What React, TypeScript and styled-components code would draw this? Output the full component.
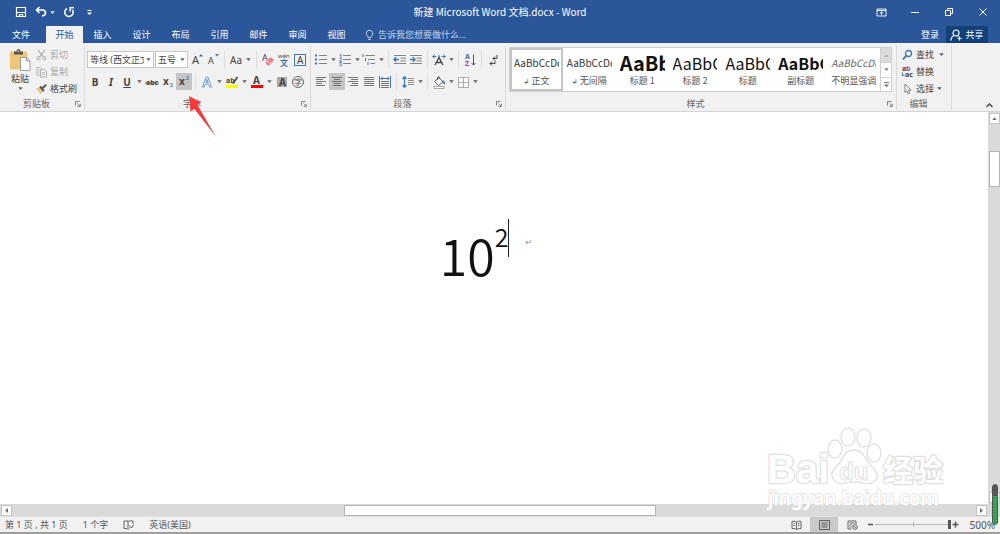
import React from "react";
import styled, { createGlobalStyle, css } from "styled-components";

const BLUE = "#2b579a";
const INK = "#444";
const ACCENT = "#3f76b0";
const UI_FONT = '"Noto Sans", "Noto Sans CJK SC", sans-serif';
const CJK_FONT = '"Noto Sans CJK SC", sans-serif';

const GlobalStyle = createGlobalStyle`
  *, *::before, *::after { box-sizing: border-box; }
  body { margin: 0; font: 9px/12px ${UI_FONT}; color: ${INK}; }
  button, select, input { font: inherit; color: inherit; margin: 0; padding: 0; border: 0; background: none; }
  svg { display: block; flex: none; }
`;

const App$ = styled.div`
  position: relative;
  display: flex;
  flex-direction: column;
  min-height: 100vh;
  background: #fff;
`;

/* ---------- title bar ---------- */
const TitleBar = styled.header`
  display: grid;
  grid-template-columns: 1fr auto 1fr;
  align-items: center;
  height: 24px;
  background: ${BLUE};
  color: #fff;
`;
const Title = styled.h1`
  margin: 0;
  font: 400 10px/14px ${CJK_FONT};
`;
const QuickAccess = styled.div`
  display: flex;
  align-items: center;
  gap: 6px;
  padding-left: 14px;
`;
const SplitButton = styled.div`
  --caret: 8px;
  display: flex;
  align-items: center;
`;
const WindowButtons = styled.div`
  display: flex;
  justify-content: flex-end;
`;
const WindowButton = styled.button`
  display: grid;
  place-items: center;
  width: 34px;
  height: 22px;
`;
const QuickButton = styled.button`
  display: grid;
  place-items: center;
  width: 14px;
  height: 16px;
`;

/* ---------- tabs ---------- */
const TabBar = styled.nav`
  display: flex;
  align-items: flex-end;
  height: 19px;
  background: ${BLUE};
  color: #fff;
`;
const Tab = styled.button<{ $kind?: "file" | "active" }>`
  width: 39px;
  height: 17px;
  line-height: 16px;
  ${(p) =>
    p.$kind === "file" &&
    css`
      width: 46px;
      padding-right: 4px;
    `}
  ${(p) =>
    p.$kind === "active" &&
    css`
      width: 37px;
      background: #f1f1f1;
      color: ${BLUE};
    `}
`;
const TellMe = styled.button`
  display: flex;
  align-items: center;
  gap: 4px;
  height: 17px;
  margin-left: 9px;
  color: #c3d1e6;
`;
const Account = styled.div`
  display: flex;
  align-items: center;
  gap: 7px;
  margin-left: auto;
  padding-right: 12px;
`;
const AccountButton = styled.button<{ $solid?: boolean }>`
  display: flex;
  align-items: center;
  justify-content: center;
  gap: 3px;
  height: 17px;
  ${(p) =>
    p.$solid &&
    css`
      width: 42px;
      background: #124078;
    `}
`;

/* ---------- ribbon ---------- */
const Ribbon = styled.section`
  display: flex;
  height: 69px;
  padding-top: 3px;
  background: #f1f1f1;
  border-bottom: 1px solid #d5d5d5;
`;
const Group = styled.div<{ $w?: number; $caret?: number }>`
  --caret: ${(p) => p.$caret ?? 9}px;
  display: flex;
  flex-direction: column;
  justify-content: space-between;
  flex: none;
  width: ${(p) => p.$w}px;
  border-right: 1px solid #dadada;
  margin-bottom: 1px;
`;
const GroupFoot = styled.div`
  display: grid;
  grid-template-columns: 1fr 10px;
  align-items: center;
  height: 12px;
  padding-right: 1px;
  text-align: center;
  color: #666;
  svg { justify-self: center; }
`;
const Rows = styled.div`
  display: flex;
  flex-direction: column;
  gap: 5px;
  padding: 5px 2px 0;
`;
const Row = styled.div`
  display: flex;
  align-items: center;
  height: 17px;
`;
const Tool = styled.button<{ $on?: boolean; $bold?: boolean; $italic?: boolean; $underline?: boolean }>`
  display: grid;
  place-items: center;
  flex: none;
  width: 16px;
  height: 17px;
  font-size: 10px;
  background: ${(p) => (p.$on ? "#c5c5c5" : "transparent")};
  font-weight: ${(p) => (p.$bold ? 700 : 400)};
  font-style: ${(p) => (p.$italic ? "italic" : "normal")};
  text-decoration: ${(p) => (p.$underline ? "underline" : "none")};
`;
const CaretButton = styled.button`
  display: grid;
  place-items: center;
  flex: none;
  width: var(--caret, 9px);
  height: 17px;
`;
const Divider = styled.span`
  flex: none;
  width: 1px;
  height: 17px;
  margin: 0 3px;
  background: #dcdcdc;
`;
const Combo = styled.label<{ $w: number }>`
  display: grid;
  grid-template-columns: minmax(0, 1fr) 9px;
  align-items: center;
  width: ${(p) => p.$w}px;
  height: 17px;
  margin-right: 1px;
  background: #fff;
  border: 1px solid #c6c6c6;
  svg { justify-self: center; }
  select {
    appearance: none;
    width: 100%;
    height: 15px;
    padding-left: 2px;
    overflow: hidden;
    white-space: nowrap;
    text-overflow: clip;
  }
`;
const ClipboardBody = styled.div`
  display: flex;
  gap: 5px;
  padding-left: 9px;
`;
const PasteButton = styled.button`
  display: flex;
  flex-direction: column;
  align-items: center;
  gap: 1px;
  width: 22px;
  padding-top: 2px;
`;
const ToolList = styled.div<{ $pad?: number }>`
  display: flex;
  flex-direction: column;
  padding-left: ${(p) => p.$pad ?? 0}px;
`;
const ListButton = styled.button<{ $muted?: boolean }>`
  display: flex;
  align-items: center;
  gap: 3px;
  height: 17px;
  color: ${(p) => (p.$muted ? "#a6a6a6" : INK)};
`;

/* ---------- style gallery ---------- */
const Gallery = styled.div`
  display: flex;
  height: 45px;
  margin: 1px 4px 0 3px;
  background: #fff;
  border: 1px solid #d0d0d0;
`;
const StyleCell = styled.button<{ $on?: boolean }>`
  display: grid;
  grid-template-rows: 1fr 14px;
  flex: 1;
  min-width: 0;
  padding: 1px 2px 0;
  border: 2px solid ${(p) => (p.$on ? "#c4c4c4" : "transparent")};
  font-family: ${CJK_FONT};
`;
const Sample = styled.span<{ $size: number; $bold?: boolean; $italic?: boolean }>`
  overflow: hidden;
  white-space: nowrap;
  text-align: left;
  align-self: center;
  font-size: ${(p) => p.$size}px;
  line-height: 22px;
  font-weight: ${(p) => (p.$bold ? 700 : 400)};
  font-style: ${(p) => (p.$italic ? "italic" : "normal")};
  color: ${(p) => (p.$italic ? "#666" : p.$size > 10 ? "#111" : "#333")};
`;
const StyleName = styled.span`
  white-space: nowrap;
  color: #555;
  small { font: 7px/8px "DejaVu Sans", sans-serif; }
`;
const GalleryScroll = styled.div`
  display: grid;
  grid-template-rows: repeat(3, 1fr);
  width: 11px;
  border-left: 1px solid #d0d0d0;
`;
const GalleryArrow = styled.button<{ $off?: boolean }>`
  display: grid;
  place-items: center;
  background: ${(p) => (p.$off ? "#dcdcdc" : "#fff")};
  color: ${(p) => (p.$off ? "#aaa" : "#666")};
  & + & { border-top: 1px solid #d0d0d0; }
`;
const Collapse = styled.button`
  align-self: flex-end;
  margin: 0 7px 3px auto;
`;

/* ---------- document ---------- */
const Workspace = styled.main`
  display: grid;
  grid-template-columns: 1fr 12px;
  flex: 1;
`;
const Page = styled.article`
  display: flex;
  justify-content: center;
  padding-top: 107px;
  color: #111;
  font-family: ${CJK_FONT};
`;
const Formula = styled.p`
  display: flex;
  align-items: flex-start;
  margin: 0;
  font-size: 50px;
  line-height: 70px;
  font-weight: 350;
  sup {
    font-size: 25px;
    line-height: 34px;
  }
`;
const TextCursor = styled.span`
  width: 1px;
  height: 38px;
  background: #222;
`;
const ReturnMark = styled.span`
  padding: 0 16px;
  font: 8px/48px "DejaVu Sans", sans-serif;
  color: #888;
`;
const VScroll = styled.div`
  display: flex;
  flex-direction: column;
  align-items: center;
  padding: 1px 0;
  background: #dadada;
`;
const HScroll = styled.div`
  display: flex;
  align-items: center;
  height: 12px;
  padding: 0 13px 0 1px;
  background: #dadada;
`;
const ScrollButton = styled.button`
  display: grid;
  place-items: center;
  flex: none;
  width: 11px;
  height: 11px;
  background: #fff;
  border: 1px solid #c3c3c3;
  color: #555;
`;
const Space = styled.span<{ $grow: number }>`
  flex: ${(p) => p.$grow} 0 0;
`;
const Thumb = styled.span<{ $grow: number; $vertical?: boolean }>`
  flex: ${(p) => p.$grow} 0 0;
  align-self: center;
  background: #fff;
  border: 1px solid #b5b5b5;
  ${(p) => (p.$vertical ? "width: 11px;" : "height: 11px;")}
`;

/* ---------- status bar ---------- */
const StatusBar = styled.footer`
  display: flex;
  align-items: center;
  height: 18px;
  padding: 0 5px;
  background: #f1f1f1;
  border-top: 1px solid #e0e0e0;
  border-bottom: 2px solid #a09e9b;
  color: #555;
`;
const StatusItem = styled.button`
  margin-right: 15px;
  white-space: nowrap;
`;
const StatusText = styled(StatusItem)`
  word-break: keep-all;
`;
const ViewButton = styled.button<{ $on?: boolean }>`
  display: grid;
  place-items: center;
  width: 28px;
  height: 15px;
  background: ${(p) => (p.$on ? "#c9c9c9" : "transparent")};
`;
const ZoomStep = styled.button`
  display: grid;
  place-items: center;
  width: 9px;
  height: 15px;
`;
const ZoomRange = styled.input`
  appearance: none;
  width: 76px;
  height: 11px;
  background: linear-gradient(#b8b8b8, #b8b8b8) center / 100% 1px no-repeat,
    linear-gradient(#b8b8b8, #b8b8b8) center / 1px 5px no-repeat;
  &::-webkit-slider-thumb {
    appearance: none;
    width: 3px;
    height: 9px;
    background: #555;
  }
`;
const ZoomValue = styled.button`
  width: 35px;
  text-align: right;
  font-size: 10px;
`;

/* ---------- overlays ---------- */
const Pointer = styled.svg`
  position: absolute;
  left: 186px;
  top: 94px;
  pointer-events: none;
`;
const Watermark = styled.div`
  position: absolute;
  right: 52px;
  bottom: 22px;
  width: 182px;
  pointer-events: none;
`;
const Meter = styled.div`
  position: absolute;
  right: 2px;
  bottom: 9px;
  width: 6px;
  height: 41px;
  border-radius: 3px;
  border: 1px solid #555;
  background: linear-gradient(#555 0 11px, transparent 11px),
    repeating-linear-gradient(#2f9e50 0 2px, #45ad62 2px 3px);
`;

/* ---------- icons ---------- */
type IconProps = { w?: number; h?: number; vb?: string; children: React.ReactNode };
const Icon = ({ w = 14, h = 14, vb, children }: IconProps) => (
  <svg width={w} height={h} viewBox={vb ?? `0 0 ${w} ${h}`} fill="none" stroke="currentColor" aria-hidden="true">
    {children}
  </svg>
);
const Tri = ({ up, left, right }: { up?: boolean; left?: boolean; right?: boolean }) => (
  <Icon w={5} h={5}>
    <path
      stroke="none"
      fill="currentColor"
      opacity=".85"
      d={up ? "M.3 3.900h4.400L2.500 1.300z" : left ? "M4 0v5L1 2.500z" : right ? "M1 0v5l3-2.500z" : "M.3 1.300h4.400L2.500 3.900z"}
    />
  </Icon>
);
const Caret = ({ label }: { label: string }) => (
  <CaretButton aria-label={label}>
    <Tri />
  </CaretButton>
);
type GlyphProps = { x: number; y: number; size: number; fill?: string; bold?: boolean; children: string };
const Glyph = ({ x, y, size, fill = INK, bold, children }: GlyphProps) => (
  <text x={x} y={y} fontSize={size} fill={fill} stroke="none" fontWeight={bold ? 700 : 400} fontFamily={UI_FONT}>
    {children}
  </text>
);
const Launcher = () => (
  <Icon w={6} h={6}>
    <path d="M.5 4.500v-4h4M2.300 2.300l2.500 2.500M5.300 2.800v2.700H2.600" stroke="#777" strokeWidth=".9" />
  </Icon>
);
const Lines = ({ rows }: { rows: [number, number][] }) => (
  <Icon>
    {rows.map(([a, b], i) => (
      <path key={i} d={`M${a} ${2.5 + i * 2}H${b}`} stroke="#666" strokeWidth=".9" />
    ))}
  </Icon>
);
const ListIcon = ({ kind }: { kind: "dot" | "num" | "multi" }) => (
  <Icon>
    {[0, 1, 2].map((i) => {
      const y = 2.5 + i * 4;
      const dx = kind === "multi" ? i * 2.5 : 0;
      return (
        <g key={i}>
          {kind === "dot" ? (
            <rect x="1" y={y - 1} width="2" height="2" fill={ACCENT} stroke="none" />
          ) : kind === "num" ? (
            <Glyph x={1} y={y + 2} size={5} fill={ACCENT} bold>{`${i + 1}`}</Glyph>
          ) : (
            <path d={`M${1 + dx} ${y - 1.500}v3`} stroke={ACCENT} />
          )}
          <path d={`M${kind === "multi" ? 3.5 + dx : 5} ${y}H13`} stroke="#777" strokeWidth=".9" />
        </g>
      );
    })}
  </Icon>
);
const IndentIcon = ({ out }: { out?: boolean }) => (
  <Icon>
    <path d="M1 2.500h12M7.500 5.200H13M7.500 7.900H13M1 10.500h12" stroke="#777" strokeWidth=".9" />
    <path
      d={out ? "M6 6.500H1M3.200 4.300L1 6.500l2.200 2.200" : "M1 6.500h5M3.800 4.300L6 6.500 3.800 8.700"}
      stroke={ACCENT}
      strokeWidth="1.400"
    />
  </Icon>
);

/* ---------- data ---------- */
const tabs = ["插入", "设计", "布局", "引用", "邮件", "审阅", "视图"];
const styles = [
  { sample: "AaBbCcDd", name: "正文", size: 10, mark: true, on: true },
  { sample: "AaBbCcDd", name: "无间隔", size: 10, mark: true },
  { sample: "AaBb", name: "标题 1", size: 20, bold: true },
  { sample: "AaBbC", name: "标题 2", size: 16 },
  { sample: "AaBbC", name: "标题", size: 16 },
  { sample: "AaBbC", name: "副标题", size: 16, bold: true },
  { sample: "AaBbCcDd", name: "不明显强调", size: 10, italic: true },
];

const ClipboardGroup = () => (
  <Group $w={85}>
    <ClipboardBody>
      <PasteButton>
        <Icon w={22} h={24}>
          <path d="M1 3.500h17v18H1z" fill="#edc777" stroke="none" />
          <path d="M5 6.500V3.500h2.500q0-2.500 2-2.500t2 2.500H14v3z" fill="#555" stroke="none" />
          <circle cx="9.500" cy="3.300" r=".9" fill="#edc777" stroke="none" />
          <path d="M11.500 9.500h6l3.500 3.500v9.500h-9.500z" fill="#fff" stroke="#888" strokeWidth=".8" />
          <path d="M17.500 9.500V13H21" stroke="#888" strokeWidth=".8" />
        </Icon>
        <span>粘贴</span>
        <Tri />
      </PasteButton>
      <ToolList>
        <ListButton $muted>
          <Icon w={11} h={12}>
            <path d="M2 1l5.500 7M9 1L3.500 8" strokeWidth="1.100" />
            <circle cx="2.500" cy="9.300" r="1.600" />
            <circle cx="8.500" cy="9.300" r="1.600" />
          </Icon>
          剪切
        </ListButton>
        <ListButton $muted>
          <Icon w={11} h={12}>
            <path
              d="M4.500 9H.8V1.500h3.700L6 3M4.500 3.500h3.800l2.200 2v5.500h-6zM6 6.500h3M6 8.500h3M2 4h1.500M2 6h1.500"
              strokeWidth=".8"
            />
          </Icon>
          复制
        </ListButton>
        <ListButton>
          <Icon w={11} h={12}>
            <path d="M.3 5.500L4.500 4l3 3.500-3 3.700z" fill="#edc082" stroke="none" />
            <path d="M4 3.500l4 4.500M6.500 5l3.800-3.200" stroke="#555" strokeWidth="2" />
          </Icon>
          格式刷
        </ListButton>
      </ToolList>
    </ClipboardBody>
    <GroupFoot>
      剪贴板
      <Launcher />
    </GroupFoot>
  </Group>
);

const FontGroup = () => (
  <Group $w={226}>
    <Rows>
      <Row>
        <Combo $w={67}>
          <select aria-label="字体">
            <option>等线 (西文正文)</option>
          </select>
          <Tri />
        </Combo>
        <Combo $w={33}>
          <select aria-label="字号">
            <option>五号</option>
          </select>
          <Tri />
        </Combo>
        <Tool aria-label="增大字号">
          <Icon>
            <Glyph x={2} y={11} size={11}>A</Glyph>
            <path d="M9 3.500h4L11 1z" fill={ACCENT} stroke="none" />
          </Icon>
        </Tool>
        <Tool aria-label="减小字号">
          <Icon>
            <Glyph x={2} y={11} size={9}>A</Glyph>
            <path d="M9 1h4l-2 2.500z" fill={ACCENT} stroke="none" />
          </Icon>
        </Tool>
        <Divider />
        <Tool aria-label="更改大小写">Aa</Tool>
        <Caret label="大小写选项" />
        <Divider />
        <Tool aria-label="清除格式">
          <Icon>
            <Glyph x={1} y={8} size={9}>A</Glyph>
            <path d="M4.500 9.500L9.500 4 13 7l-5 5.500H6.500z" fill="#e8808c" stroke="none" />
            <path d="M6 7.800l3.800 3" stroke="#fff" strokeWidth=".7" />
          </Icon>
        </Tool>
        <Tool aria-label="拼音指南">
          <Icon>
            <Glyph x={1} y={5} size={6}>wén</Glyph>
            <Glyph x={3} y={13} size={8} fill={ACCENT} bold>文</Glyph>
          </Icon>
        </Tool>
        <Tool aria-label="字符边框">
          <Icon>
            <rect x="1.500" y="1.500" width="11" height="11" stroke={ACCENT} />
            <Glyph x={4} y={11} size={10}>A</Glyph>
          </Icon>
        </Tool>
      </Row>
      <Row>
        <Tool $bold>B</Tool>
        <Tool $italic $bold>I</Tool>
        <Tool $underline $bold>U</Tool>
        <Caret label="下划线选项" />
        <Tool aria-label="删除线">
          <Icon>
            <Glyph x={1} y={10} size={7} bold>abc</Glyph>
            <path d="M0 8h14" strokeWidth=".8" />
          </Icon>
        </Tool>
        <Tool aria-label="下标">
          <Icon>
            <Glyph x={2} y={10} size={10} bold>x</Glyph>
            <Glyph x={9} y={12} size={5} fill={ACCENT} bold>2</Glyph>
          </Icon>
        </Tool>
        <Tool $on aria-label="上标" aria-pressed="true">
          <Icon>
            <Glyph x={2} y={10} size={10} bold>x</Glyph>
            <Glyph x={9} y={5} size={5} fill={ACCENT} bold>2</Glyph>
          </Icon>
        </Tool>
        <Divider />
        <Tool aria-label="文本效果">
          <Icon>
            <path
              d="M2.500 12L6.200 2h1.600l3.700 10H9.700l-1-2.800H5.300l-1 2.800zM5.900 7.500h2.200L7 4.300z"
              fill="#fff"
              stroke="#5b91cc"
              strokeWidth=".9"
            />
          </Icon>
        </Tool>
        <Caret label="文本效果选项" />
        <Tool aria-label="突出显示">
          <Icon>
            <Glyph x={1} y={8} size={7} bold>ab</Glyph>
            <path d="M12.500 2L8 8.500" strokeWidth="1.600" />
            <path d="M1 11.500h12" stroke="#ff0" strokeWidth="3" />
          </Icon>
        </Tool>
        <Caret label="突出显示颜色" />
        <Tool aria-label="字体颜色">
          <Icon>
            <Glyph x={3} y={9} size={10} bold>A</Glyph>
            <path d="M1 11.500h12" stroke="#f00" strokeWidth="3" />
          </Icon>
        </Tool>
        <Caret label="字体颜色选项" />
        <Tool aria-label="字符底纹">
          <Icon>
            <rect x="2" y="2" width="10" height="10" fill="#aaa" stroke="none" />
            <Glyph x={4} y={11} size={10} bold>A</Glyph>
          </Icon>
        </Tool>
        <Tool aria-label="带圈字符">
          <Icon>
            <circle cx="7" cy="7" r="5.500" strokeWidth=".8" />
            <Glyph x={3} y={10} size={8}>字</Glyph>
          </Icon>
        </Tool>
      </Row>
    </Rows>
    <GroupFoot>
      字体
      <Launcher />
    </GroupFoot>
  </Group>
);

const ParagraphGroup = () => (
  <Group $w={195} $caret={8}>
    <Rows>
      <Row>
        <Tool aria-label="项目符号"><ListIcon kind="dot" /></Tool>
        <Caret label="项目符号选项" />
        <Tool aria-label="编号"><ListIcon kind="num" /></Tool>
        <Caret label="编号选项" />
        <Tool aria-label="多级列表"><ListIcon kind="multi" /></Tool>
        <Caret label="多级列表选项" />
        <Divider />
        <Tool aria-label="减少缩进"><IndentIcon out /></Tool>
        <Tool aria-label="增加缩进"><IndentIcon /></Tool>
        <Divider />
        <Tool aria-label="中文版式">
          <Icon>
            <path d="M3 12l4-7.500L11 12M4.500 9.500h5" strokeWidth="1.300" />
            <path d="M.5 3.500h4M2.500 1.500L.8 3.500l1.700 2M13.500 3.500h-4M11.500 1.500l1.700 2-1.700 2M7 2v3" stroke={ACCENT} />
          </Icon>
        </Tool>
        <Caret label="中文版式选项" />
        <Divider />
        <Tool aria-label="排序">
          <Icon>
            <Glyph x={2} y={6} size={7} fill={ACCENT} bold>A</Glyph>
            <Glyph x={2} y={13} size={7} fill="#8452a8" bold>Z</Glyph>
            <path d="M10.500 1.500v10.500M8.500 10l2 2 2-2" strokeWidth=".9" />
          </Icon>
        </Tool>
        <Divider />
        <Tool aria-label="显示编辑标记">
          <Icon>
            <path d="M11 2v3.500H7M9 3.500l-2 2 2 2M9 8v2.500H4M6 8.500l-2 2 2 2" />
          </Icon>
        </Tool>
      </Row>
      <Row>
        <Tool aria-label="左对齐"><Lines rows={[[2, 12], [2, 9], [2, 12], [2, 8], [2, 11]]} /></Tool>
        <Tool $on aria-label="居中"><Lines rows={[[2, 12], [4, 10], [2, 12], [4, 10], [3, 11]]} /></Tool>
        <Tool aria-label="右对齐"><Lines rows={[[2, 12], [5, 12], [2, 12], [6, 12], [4, 12]]} /></Tool>
        <Tool aria-label="两端对齐"><Lines rows={[[2, 12], [2, 12], [2, 12], [2, 12], [2, 12]]} /></Tool>
        <Tool aria-label="分散对齐">
          <Icon>
            <path
              d="M1.500 1v12M12.500 1v12M3 3.500h8M4.500 2L3 3.500 4.500 5M9.500 2L11 3.500 9.500 5"
              stroke={ACCENT}
            />
            <path d="M3 6.500h8M3 8.500h8M3 10.500h8M3 12.500h8" stroke="#666" strokeWidth=".9" />
          </Icon>
        </Tool>
        <Divider />
        <Tool aria-label="行距">
          <Icon>
            <path d="M3.500 2v10M1.500 4l2-2.300 2 2.300M1.500 10l2 2.300 2-2.300" stroke={ACCENT} strokeWidth="1.200" />
            <path d="M7 3.500h6M7 5.500h6M7 7.500h6M7 9.500h6" stroke="#777" strokeWidth=".8" />
          </Icon>
        </Tool>
        <Caret label="行距选项" />
        <Divider />
        <Tool aria-label="底纹">
          <Icon>
            <path d="M2.500 6.500L7 2.500l4 4.500-4.500 3.500zM5.500 5V2.500q1-2 2 0V4" fill="#fff" strokeWidth=".9" />
            <path d="M10.500 5q3 1 2.500 5-1.500-.5-2-3z" fill={ACCENT} stroke="none" />
            <path d="M2 11.500h10v2H2z" stroke="#888" strokeWidth=".7" fill="#fff" />
          </Icon>
        </Tool>
        <Caret label="底纹选项" />
        <Tool aria-label="边框">
          <Icon>
            <path d="M2.500 2.500h10v10h-10zM7.500 2.500v10M2.500 7.500h10" stroke="#999" fill="#fff" strokeWidth=".8" />
          </Icon>
        </Tool>
        <Caret label="边框选项" />
      </Row>
    </Rows>
    <GroupFoot>
      段落
      <Launcher />
    </GroupFoot>
  </Group>
);

const StylesGroup = () => (
  <Group $w={391}>
    <Gallery>
      {styles.map((s) => (
        <StyleCell key={s.name} $on={s.on}>
          <Sample $size={s.size} $bold={s.bold} $italic={s.italic}>{s.sample}</Sample>
          <StyleName>
            {s.mark && <small>↲ </small>}
            {s.name}
          </StyleName>
        </StyleCell>
      ))}
      <GalleryScroll>
        <GalleryArrow $off aria-label="上一行"><Tri up /></GalleryArrow>
        <GalleryArrow aria-label="下一行"><Tri /></GalleryArrow>
        <GalleryArrow aria-label="其他样式">
          <Icon w={7} h={7}>
            <path d="M1 1.500h5" strokeWidth=".9" />
            <path d="M1 3.500h5L3.500 6z" fill="currentColor" stroke="none" />
          </Icon>
        </GalleryArrow>
      </GalleryScroll>
    </Gallery>
    <GroupFoot>
      样式
      <Launcher />
    </GroupFoot>
  </Group>
);

const EditGroup = () => (
  <Group $w={55}>
    <ToolList $pad={5}>
      <ListButton>
        <Icon w={11} h={12}>
          <circle cx="6.500" cy="4.500" r="3" stroke={ACCENT} strokeWidth="1.300" />
          <path d="M4.300 6.700L1 10.300" stroke={ACCENT} strokeWidth="1.800" />
        </Icon>
        查找
        <Caret label="查找选项" />
      </ListButton>
      <ListButton>
        <Icon w={11} h={12}>
          <Glyph x={0} y={5} size={7} bold>a</Glyph>
          <Glyph x={4} y={5} size={7} fill="#8452a8" bold>b</Glyph>
          <Glyph x={3} y={11} size={7} bold>ac</Glyph>
          <path d="M.5 6.500v3h2" stroke={ACCENT} />
        </Icon>
        替换
      </ListButton>
      <ListButton>
        <Icon w={11} h={12}>
          <path d="M3 1v8.500l2-1.800 1.300 3.300 1.400-.6L6.500 7.200H9z" fill="#fff" stroke="#666" strokeWidth=".8" />
        </Icon>
        选择
        <Tri />
      </ListButton>
    </ToolList>
    <GroupFoot as="div">
      编辑
      <span />
    </GroupFoot>
  </Group>
);

export default function App() {
  return (
    <App$>
      <GlobalStyle />
      <TitleBar>
        <QuickAccess>
          <QuickButton aria-label="保存">
            <Icon w={12} h={12}>
              <path d="M1.500 1.500h9v9h-9zM1.500 6.500h9M4.500 10.500v-2h3v2" strokeWidth="1.200" />
            </Icon>
          </QuickButton>
          <SplitButton>
            <QuickButton aria-label="撤消">
              <Icon w={12} h={12}>
                <path d="M1.500 4h6q3 0 3 2.800T7 10M4.500 1l-3 3 3 3" strokeWidth="1.600" />
              </Icon>
            </QuickButton>
            <Caret label="撤消选项" />
          </SplitButton>
          <QuickButton aria-label="恢复">
            <Icon w={12} h={12}>
              <path d="M4 2.500A4.200 4.200 0 1 0 9.500 4M11 1.700H7.200V5.500" strokeWidth="1.500" />
            </Icon>
          </QuickButton>
          <QuickButton aria-label="自定义快速访问工具栏">
            <Icon w={7} h={7}>
              <path d="M1.500 1.500h4" />
              <path d="M1 3.500h5L3.500 6z" fill="currentColor" stroke="none" />
            </Icon>
          </QuickButton>
        </QuickAccess>
        <Title>新建 Microsoft Word 文档.docx - Word</Title>
        <WindowButtons>
          <WindowButton aria-label="功能区显示选项">
            <Icon w={11} h={9}>
              <path d="M1 1h9v7H1zM1 2.500h9M5.500 7V4M4 5.200L5.500 3.800 7 5.200" strokeWidth=".9" />
            </Icon>
          </WindowButton>
          <WindowButton aria-label="最小化">
            <Icon w={8} h={9}><path d="M0 4.500h8" /></Icon>
          </WindowButton>
          <WindowButton aria-label="还原">
            <Icon w={8} h={8}><path d="M.5 2.500h5v5h-5zM2.500 2.500v-2h5v5h-2" /></Icon>
          </WindowButton>
          <WindowButton aria-label="关闭">
            <Icon w={8} h={8}><path d="M.5.5l7 7M7.500.5l-7 7" /></Icon>
          </WindowButton>
        </WindowButtons>
      </TitleBar>

      <TabBar>
        <Tab $kind="file">文件</Tab>
        <Tab $kind="active">开始</Tab>
        {tabs.map((t) => <Tab key={t}>{t}</Tab>)}
        <TellMe>
          <Icon w={9} h={12}>
            <path d="M3 8.500Q3 7.300 2 6.300 1 5 1.300 3.800 2 1.200 4.500 1.200T7.700 3.800Q8 5 7 6.300 6 7.300 6 8.500zM3.200 10.500h2.600" />
          </Icon>
          告诉我您想要做什么...
        </TellMe>
        <Account>
          <AccountButton>登录</AccountButton>
          <AccountButton $solid>
            <Icon w={12} h={12}>
              <circle cx="6" cy="4" r="3" strokeWidth="1.200" />
              <path d="M1 11.500q0-4 3.500-5M7.500 6.700l1 .8M9.500 7.500v4M7.500 9.500h4" strokeWidth="1.200" />
            </Icon>
            共享
          </AccountButton>
        </Account>
      </TabBar>

      <Ribbon>
        <ClipboardGroup />
        <FontGroup />
        <ParagraphGroup />
        <StylesGroup />
        <EditGroup />
        <Collapse aria-label="折叠功能区">
          <Icon w={7} h={5}><path d="M.5 4L3.500 1l3 3" strokeWidth="1.300" /></Icon>
        </Collapse>
      </Ribbon>

      <Workspace>
        <Page>
          <Formula>
            10<sup>2</sup>
            <TextCursor />
            <ReturnMark>↵</ReturnMark>
          </Formula>
        </Page>
        <VScroll>
          <ScrollButton aria-label="向上滚动"><Tri up /></ScrollButton>
          <Space $grow={27} />
          <Thumb $vertical $grow={34} />
          <Space $grow={307} />
          <ScrollButton aria-label="向下滚动"><Tri /></ScrollButton>
        </VScroll>
      </Workspace>
      <HScroll>
        <ScrollButton aria-label="向左滚动"><Tri left /></ScrollButton>
        <Space $grow={332} />
        <Thumb $grow={311} />
        <Space $grow={320} />
        <ScrollButton aria-label="向右滚动"><Tri right /></ScrollButton>
      </HScroll>

      <StatusBar>
        <StatusText>第 1 页 , 共 1 页</StatusText>
        <StatusText>1 个字</StatusText>
        <StatusItem aria-label="校对">
          <Icon w={11} h={11}>
            <path
              d="M5 9.500V2H1v7.500h3L5.500 11M5 2.500Q6 1.500 10 2v3M6 9.500l1-1M6.500 6.500l2 2.500L11 5.500"
              strokeWidth=".9"
            />
          </Icon>
        </StatusItem>
        <StatusText>英语(美国)</StatusText>
        <Space $grow={1} />
        <ViewButton aria-label="阅读视图">
          <Icon w={11} h={10}>
            <path
              d="M5.500 2v7.500M5.500 2Q3 .5 1 1.500v7q2-.5 4.500 1Q8 8 10 8.500v-7Q8 .5 5.500 2M2.500 3.500H4M2.500 5.500H4M7 3.500h1.500M7 5.500h1.500"
              strokeWidth=".9"
            />
          </Icon>
        </ViewButton>
        <ViewButton $on aria-label="页面视图">
          <Icon w={11} h={10}>
            <path d="M.5.500h10v9H.500zM2.500 3h6M2.500 5h6M2.500 7h6" strokeWidth=".9" />
          </Icon>
        </ViewButton>
        <ViewButton aria-label="Web 版式视图">
          <Icon w={11} h={10}>
            <path d="M4.500 9H1V1h8v3M2.500 3h5M2.500 5H5M2.500 7h2" strokeWidth=".9" />
            <circle cx="8" cy="7" r="2.300" strokeWidth=".9" />
            <path d="M6.300 5.500l3.400 3" strokeWidth=".9" />
          </Icon>
        </ViewButton>
        <ZoomStep aria-label="缩小">
          <Icon w={5} h={7}><path d="M0 3.500h5" strokeWidth="1.500" /></Icon>
        </ZoomStep>
        <ZoomRange type="range" min={10} max={500} defaultValue={500} aria-label="显示比例" />
        <ZoomStep aria-label="放大">
          <Icon w={7} h={7}><path d="M.5 3.500h6M3.500.5v6" strokeWidth="1.400" /></Icon>
        </ZoomStep>
        <ZoomValue>500%</ZoomValue>
      </StatusBar>

      <Pointer width="32" height="44" viewBox="0 0 32 44" aria-hidden="true">
        <path d="M3 2l12 6.500-3.500 2.500L30 43 8.500 15 4.500 17.500z" fill="#fa3a3a" />
      </Pointer>

      <Watermark aria-hidden="true">
        <svg width="182" height="86" viewBox="0 0 182 86" fill="#fff" stroke="#e0e0e0" strokeLinejoin="round">
          <g fontFamily='"Liberation Sans", sans-serif' fontWeight="700" paintOrder="stroke" strokeWidth="2.400">
            <text x="1" y="57" fontSize="40">Bai</text>
            <text x="117" y="55" fontSize="30" fontFamily={CJK_FONT}>经验</text>
          </g>
          <g strokeWidth="1.400">
            <ellipse cx="69" cy="23" rx="7" ry="9" />
            <ellipse cx="82" cy="11" rx="7" ry="9" />
            <ellipse cx="98" cy="12" rx="7" ry="9" />
            <ellipse cx="108" cy="27" rx="7" ry="9" />
            <path d="M88 24q7 0 11 7t9 12q6 6 1 12-5 4-12 2-9-2-18 0-8 2-11-3-5-6 1-12 5-4 8-11t11-7z" />
          </g>
          <text x="73" y="54" fontSize="24" strokeWidth="1" fontWeight="700" fontFamily='"Liberation Sans", sans-serif'>
            du
          </text>
          <text x="2" y="79" fontSize="19" strokeWidth="1.600" paintOrder="stroke" fontWeight="600" fontFamily={UI_FONT}>
            jingyan.baidu.com
          </text>
        </svg>
      </Watermark>
      <Meter aria-hidden="true" />
    </App$>
  );
}
